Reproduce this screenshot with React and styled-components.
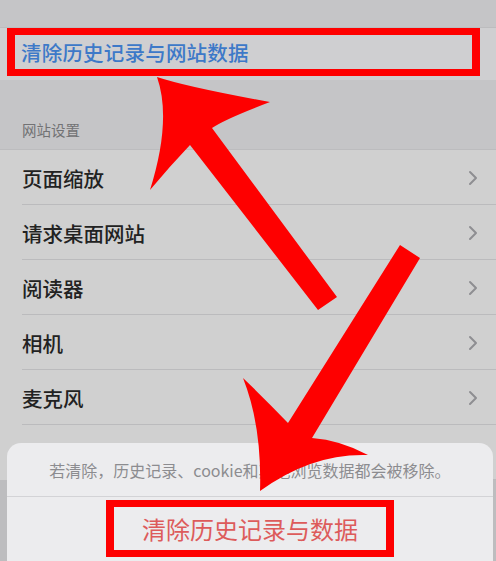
import React from "react";
import styled, { createGlobalStyle } from "styled-components";

const GlobalStyle = createGlobalStyle`
  html, body {
    margin: 0;
    padding: 0;
    background: #c5c5c7;
  }
  body {
    font-family: "Noto Sans CJK SC", "Noto Sans", "Liberation Sans", sans-serif;
  }
`;

const Screen = styled.div`
  position: relative;
  width: 496px;
  height: 561px;
  overflow: hidden;
  background: #c5c5c7;
`;

const TopStrip = styled.div`
  height: 27px;
  background: #c5c5c7;
  border-bottom: 1px solid #bcbcbe;
`;

const ClearRow = styled.div`
  height: 52px;
  background: #cfcfd1;
  padding: 0 16px 4px 7px;
  box-sizing: border-box;
  display: flex;
`;

const Highlight = styled.div`
  flex: ${({ $grow }) => ($grow ? 1 : "none")};
  display: flex;
  align-items: center;
  justify-content: ${({ $center }) => ($center ? "center" : "flex-start")};
  box-sizing: border-box;
  border: 7px solid #fe0000;
  border-left-width: 8px;
  border-right-width: 8px;
  padding: ${({ $pad }) => $pad || "0"};
`;

const ButtonBox = styled(Highlight)`
  width: 288px;
  height: 57px;
`;

const LinkText = styled.span`
  font-size: 20.5px;
  font-weight: 500;
  color: #3d79c8;
  letter-spacing: 0.2px;
`;

const SectionHeader = styled.div`
  height: 70px;
  box-sizing: border-box;
  padding: 0 22px 9px;
  display: flex;
  align-items: flex-end;
  font-size: 14.5px;
  color: #727274;
  border-bottom: 1px solid #bcbcbe;
`;

const List = styled.div`
  background: #d0d0d0;
`;

const Row = styled.div`
  position: relative;
  height: 55px;
  display: flex;
  align-items: center;
  justify-content: space-between;
  padding: 0 18px 0 22px;
  box-sizing: border-box;
  font-size: 20.5px;
  font-weight: 500;
  color: #222222;

  &::after {
    content: "";
    position: absolute;
    left: 22px;
    right: 0;
    bottom: 0;
    height: 1px;
    background: #bbbbbd;
  }
`;

const Footer = styled.div`
  height: 200px;
  background: #bdbdbf;
`;

const Sheet = styled.div`
  position: absolute;
  top: 443px;
  left: 7px;
  width: 486px;
  height: 140px;
  background: #ececee;
  border-radius: 14px;
  display: flex;
  flex-direction: column;
`;

const Message = styled.div`
  height: 53px;
  display: flex;
  align-items: center;
  justify-content: center;
  font-size: 16px;
  color: #8c8c90;
  border-bottom: 1px solid #d3d3d6;
`;

const ButtonArea = styled.div`
  display: flex;
  justify-content: center;
  padding-top: 3px;
`;

const DangerText = styled.span`
  font-size: 24px;
  color: #dd5b5b;
`;

const Overlay = styled.svg`
  position: absolute;
  inset: 0;
  z-index: 10;
  pointer-events: none;
`;

const Chevron = () => (
  <svg width="10" height="16" viewBox="0 0 10 16">
    <polyline
      points="2,2 8,8 2,14"
      fill="none"
      stroke="#8e8e92"
      strokeWidth="2"
      strokeLinecap="round"
      strokeLinejoin="round"
    />
  </svg>
);

const rows = ["页面缩放", "请求桌面网站", "阅读器", "相机", "麦克风"];

export default function App() {
  return (
    <>
      <GlobalStyle />
      <Screen>
        <TopStrip />
        <ClearRow>
          <Highlight $grow $pad="0 0 0 6px">
            <LinkText>清除历史记录与网站数据</LinkText>
          </Highlight>
        </ClearRow>
        <SectionHeader>网站设置</SectionHeader>
        <List>
          {rows.map((label) => (
            <Row key={label}>
              <span>{label}</span>
              <Chevron />
            </Row>
          ))}
          {/* row hidden behind the action sheet */}
          <Row />
        </List>
        <Footer />

        <Sheet>
          <Message>若清除，历史记录、cookie和其他浏览数据都会被移除。</Message>
          <ButtonArea>
            <ButtonBox $center>
              <DangerText>清除历史记录与数据</DangerText>
            </ButtonBox>
          </ButtonArea>
        </Sheet>

        <Overlay width="496" height="561" viewBox="0 0 496 561">
          <path
            fill="#fe0000"
            d="M157,77 Q172,120 150,190 Q170,166 190,145 L318,310 L337,297 L212,128 Q225,119 270,102 Q187,87 157,77 Z"
          />
          <path
            fill="#fe0000"
            d="M400,245 L420,258 L312,438 Q340,440 368,455 Q312,453 260,491 Q262,426 243,378 Q266,400 288,423 Z"
          />
        </Overlay>
      </Screen>
    </>
  );
}
